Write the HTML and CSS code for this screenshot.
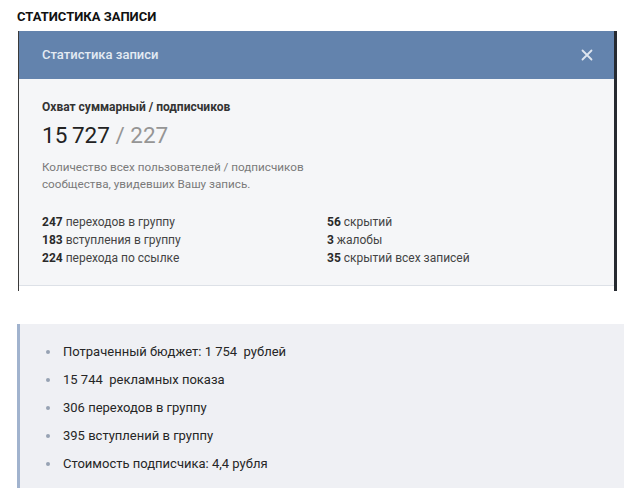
FILE: index.html
```html
<!DOCTYPE html>
<html lang="ru">
<head>
<meta charset="utf-8">
<title>Статистика записи</title>
<link rel="stylesheet" href="styles.css">
</head>
<body>
<h2 class="page-title">СТАТИСТИКА ЗАПИСИ</h2>

<div class="shot">
  <div class="shot-head">
    <span class="shot-head__title">Статистика записи</span>
    <svg class="shot-head__close" width="12" height="12" viewBox="0 0 12 12" aria-hidden="true">
      <path d="M1.5 1.5 L10.5 10.5 M10.5 1.5 L1.5 10.5" stroke="currentColor" stroke-width="1.8" stroke-linecap="round"/>
    </svg>
  </div>
  <div class="shot-body">
    <div class="reach-label">Охват суммарный / подписчиков</div>
    <div class="reach-value">15&#8201;727 <span class="reach-value__sub">/ 227</span></div>
    <p class="reach-desc">Количество всех пользователей / подписчиков<br>сообщества, увидевших Вашу запись.</p>
    <div class="stats">
      <div class="stats__col">
        <div><b>247</b> переходов в группу</div>
        <div><b>183</b> вступления в группу</div>
        <div><b>224</b> перехода по ссылке</div>
      </div>
      <div class="stats__col">
        <div><b>56</b> скрытий</div>
        <div><b>3</b> жалобы</div>
        <div><b>35</b> скрытий всех записей</div>
      </div>
    </div>
  </div>
  <div class="shot-foot"></div>
</div>

<ul class="summary">
  <li>Потраченный бюджет: 1 754&nbsp; рублей</li>
  <li>15 744&nbsp; рекламных показа</li>
  <li>306 переходов в группу</li>
  <li>395 вступлений в группу</li>
  <li>Стоимость подписчика: 4,4 рубля</li>
</ul>
</body>
</html>
```

FILE: styles.css
```css
* {
  box-sizing: border-box;
}

body {
  margin: 0;
  padding: 8px 0 0 17px;
  background: #ffffff;
  font-family: Roboto, "Noto Sans", "Liberation Sans", sans-serif;
  color: #222222;
}

.page-title {
  margin: 0;
  font-size: 13px;
  line-height: 18px;
  font-weight: 700;
  color: #111111;
}

/* embedded screenshot of the stats popup */
.shot {
  margin: 5px 0 0 1px;
  width: 599px;
  border-left: 1px solid #3a3a3a;
  border-right: 3px solid #262a30;
}

.shot-head {
  height: 48px;
  display: flex;
  align-items: center;
  justify-content: space-between;
  padding: 0 21px 1px 23px;
  background: #6383ad;
  color: #e4ebf3;
}

.shot-head__title {
  font-size: 13px;
  font-weight: 500;
}

.shot-head__close {
  display: block;
  color: #dfe6ef;
}

.shot-body {
  padding: 20px 23px 18px;
  background: #f5f6f8;
  border-bottom: 1px solid #dde1e7;
}

.reach-label {
  font-size: 12px;
  line-height: 16px;
  font-weight: 700;
  color: #333333;
}

.reach-value {
  margin-top: 6px;
  font-size: 22.5px;
  line-height: 28px;
  color: #222222;
}

.reach-value__sub {
  color: #959595;
}

.reach-desc {
  margin: 10px 0 0;
  font-size: 11.7px;
  line-height: 17px;
  color: #7a7a7a;
}

.stats {
  margin-top: 20px;
  display: grid;
  grid-template-columns: 285px 1fr;
  font-size: 12px;
  line-height: 18px;
  color: #444444;
}

.stats b {
  font-weight: 700;
  color: #2a2a2a;
}

.shot-foot {
  height: 5px;
  background: #ffffff;
}

/* summary quote block */
.summary {
  margin: 33px 0 0;
  width: 607px;
  list-style: none;
  padding: 14px 0 10px 43px;
  background: #eff0f4;
  border-left: 3px solid #a1b3ce;
  font-size: 13px;
  line-height: 28px;
  color: #262626;
}

.summary li {
  position: relative;
}

.summary li::before {
  content: "";
  position: absolute;
  left: -17px;
  top: 12px;
  width: 4px;
  height: 4px;
  border-radius: 50%;
  background: #97a2b3;
}
```
